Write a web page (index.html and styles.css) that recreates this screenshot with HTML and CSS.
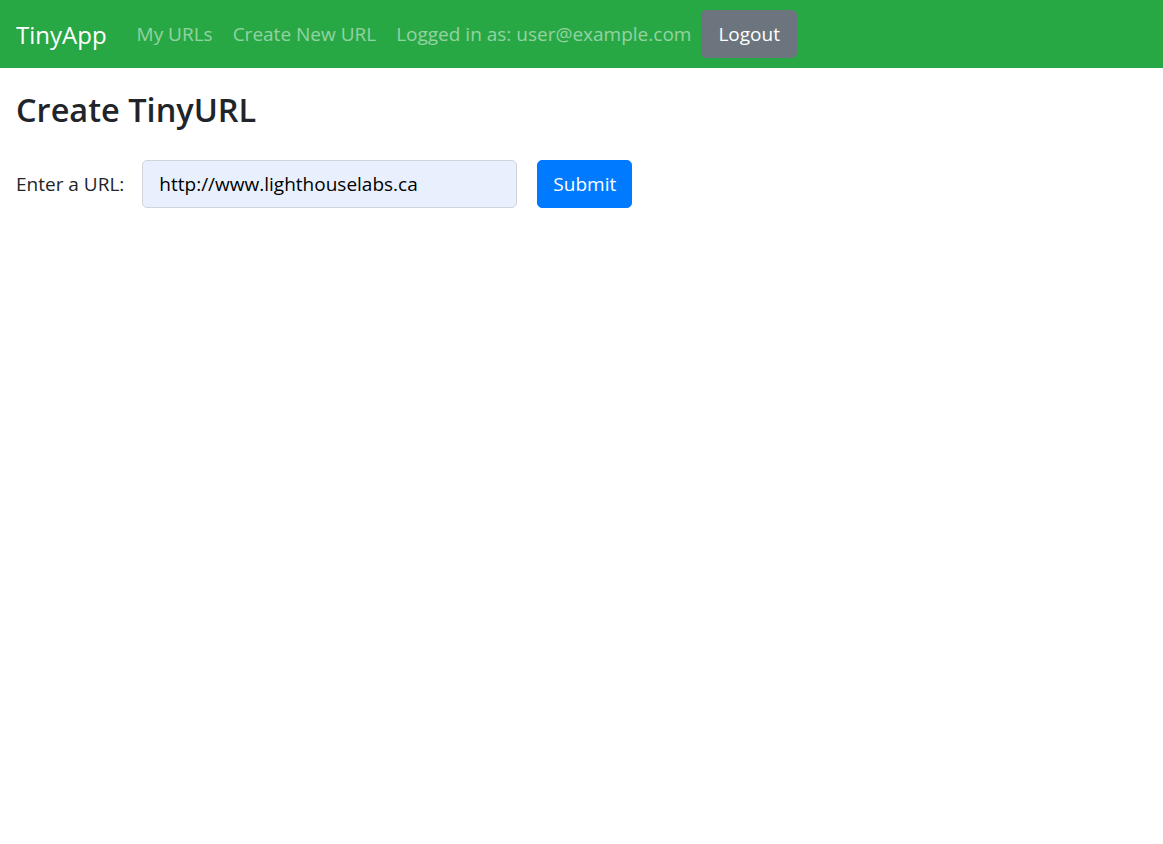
FILE: index.html
```html
<!DOCTYPE html>
<html lang="en">
<head>
<meta charset="utf-8">
<title>TinyApp</title>
<link rel="stylesheet" href="styles.css">
</head>
<body>
<nav class="navbar">
  <a class="brand" href="#">TinyApp</a>
  <div class="nav">
    <a class="nav-link" href="#">My URLs</a>
    <a class="nav-link" href="#">Create New URL</a>
    <span class="nav-link">Logged in as: user@example.com</span>
    <button class="btn btn-secondary" type="button">Logout</button>
  </div>
</nav>
<main class="content">
  <h2 class="title">Create TinyURL</h2>
  <form class="url-form">
    <label class="label" for="longURL">Enter a URL:</label>
    <input class="input" id="longURL" type="text" value="http://www.lighthouselabs.ca">
    <button class="btn btn-primary" type="submit">Submit</button>
  </form>
</main>
</body>
</html>
```
FILE: styles.css
```css
* { box-sizing: border-box; }
html, body { margin: 0; padding: 0; }
body {
  font-family: "Open Sans", "Noto Sans", sans-serif;
  color: #212529;
  background: #fff;
}
.navbar {
  display: flex;
  align-items: center;
  height: 68px;
  padding: 0 16px;
  background: #28a745;
}
.brand {
  font-size: 24px;
  color: #fff;
  text-decoration: none;
  margin-right: 20px;
}
.nav { display: flex; align-items: center; }
.nav-link {
  font-size: 19px;
  padding: 0 10px;
  color: rgba(255,255,255,.5);
  text-decoration: none;
}
.btn {
  font-family: inherit;
  font-size: 19px;
  line-height: 30px;
  height: 48px;
  padding: 8px 16px;
  border: 1px solid transparent;
  border-radius: 5px;
  color: #fff;
  cursor: pointer;
}
.btn-secondary { background: #6c757d; border-color: #6c757d; }
.btn-primary { background: #007bff; border-color: #007bff; padding: 8px 15px; }
.content { padding: 23px 16px 0; }
.title {
  font-size: 32.5px;
  font-weight: 600;
  line-height: 38px;
  margin: 0;
}
.url-form {
  display: flex;
  align-items: center;
  margin-top: 31px;
}
.label { font-size: 19px; margin-right: 18px; }
.input {
  font-family: inherit;
  font-size: 19px;
  width: 375px;
  height: 48px;
  padding: 8px 16px;
  border: 1px solid #ced4da;
  border-radius: 5px;
  background: #e8f0fe;
  color: #000;
  margin-right: 20px;
}
```
